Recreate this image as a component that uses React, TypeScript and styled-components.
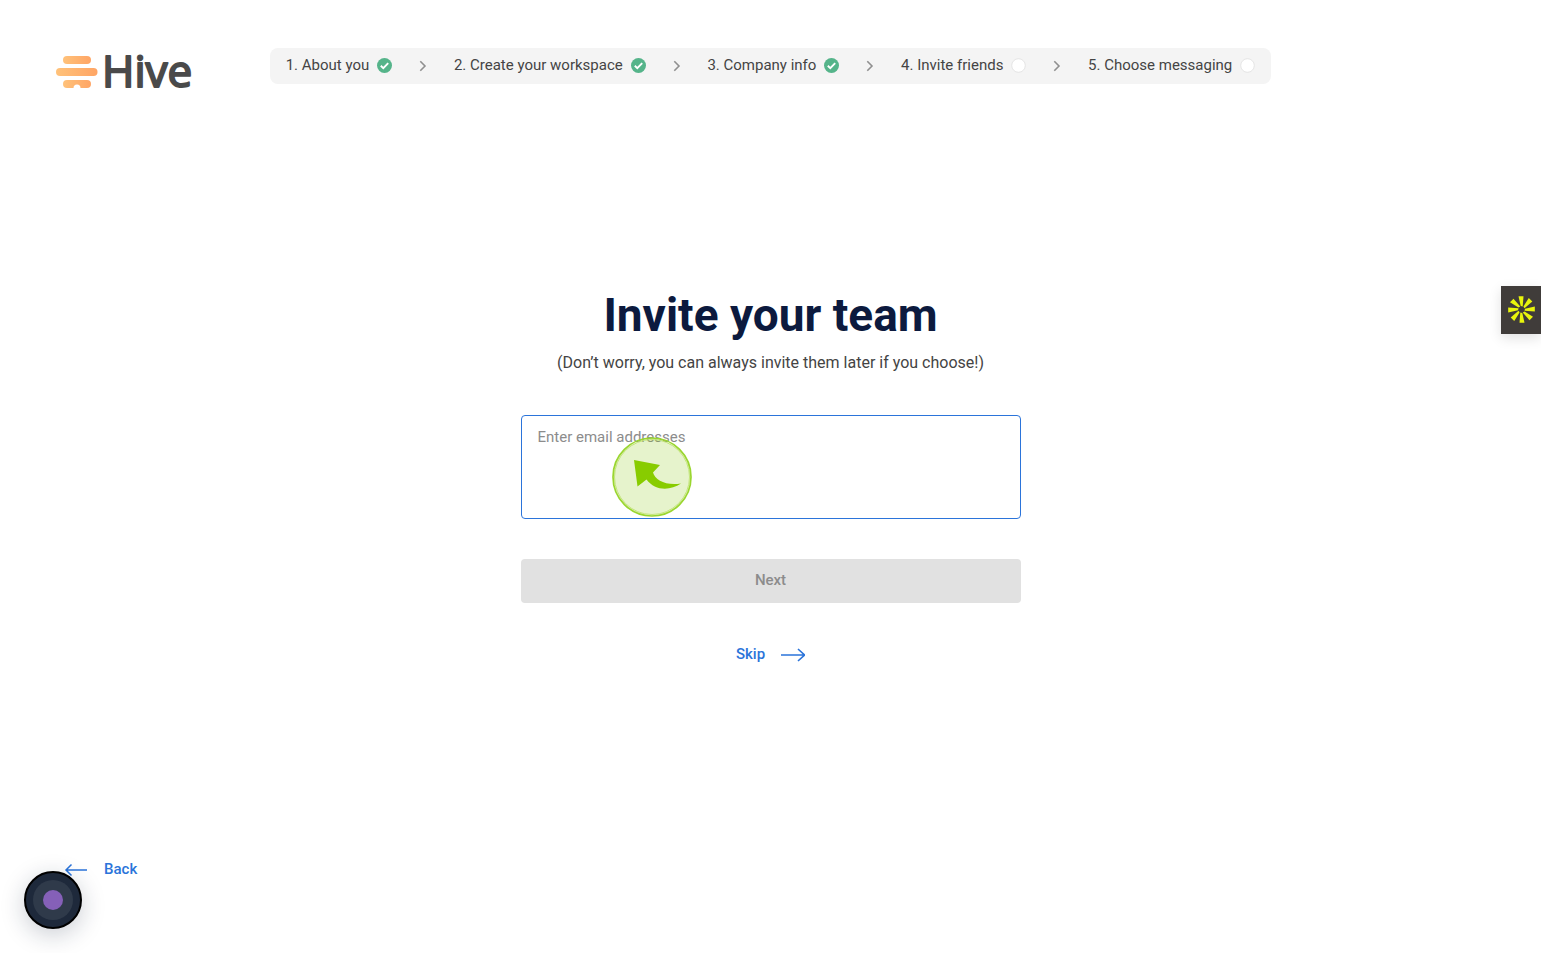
import React from 'react';
import styled, { createGlobalStyle } from 'styled-components';

const GlobalStyle = createGlobalStyle`
  *, *::before, *::after { box-sizing: border-box; }
  body {
    margin: 0;
    background: #fff;
    color: #444;
    font-family: Roboto, "Liberation Sans", sans-serif;
    font-size: 15px;
    line-height: 20px;
  }
`;

const Page = styled.div`
  display: flex;
  flex-direction: column;
  min-height: 100vh;
  overflow: hidden;
`;

const Header = styled.header`
  display: grid;
  grid-template-columns: 1fr auto 1fr;
  align-items: start;
  padding-top: 48px;
`;

const Logo = styled.a`
  display: flex;
  align-items: center;
  gap: 4px;
  height: 48px;
  padding-left: 56px;
  text-decoration: none;
`;

const LogoName = styled.text`
  fill: #4a4a4a;
  stroke: #4a4a4a;
  stroke-width: 2px;
  stroke-linejoin: round;
  font-family: "Open Sans", sans-serif;
  font-size: 44px;
  font-weight: 400;
`;

const Steps = styled.ol`
  display: flex;
  align-items: center;
  justify-content: space-between;
  width: 65vw;
  height: 36px;
  margin: 0;
  padding: 0 16px;
  border-radius: 8px;
  background: #f4f4f4;
  list-style: none;
`;

const Step = styled.li`
  display: flex;
  align-items: center;
  gap: 8px;
  padding-bottom: 2px;
  white-space: nowrap;
`;

const Divider = styled.li`
  display: flex;
`;

const Main = styled.main`
  display: flex;
  flex-direction: column;
  align-items: center;
  padding: 191px 24px 0;
`;

const Title = styled.h1`
  margin: 0;
  color: #0c1a3e;
  font-size: 46px;
  font-weight: 700;
  line-height: 56px;
`;

const Subtitle = styled.p`
  margin: 10px 0 42px;
  font-size: 16px;
`;

const Form = styled.form`
  display: flex;
  flex-direction: column;
  align-items: center;
  gap: 40px;
  width: 100%;
  max-width: 500px;
`;

const Field = styled.div`
  position: relative;
  display: flex;
  width: 100%;
`;

const EmailBox = styled.textarea`
  width: 100%;
  height: 104px;
  padding: 11px 16px;
  border: 1px solid #2b74da;
  border-radius: 4px;
  outline: none;
  background: #fff;
  color: #444;
  font: inherit;
  resize: none;
  &::placeholder { color: #8c8c8c; opacity: 1; }
`;

const Pointer = styled.svg`
  position: absolute;
  top: 22px;
  left: 91px;
  pointer-events: none;
`;

const NextButton = styled.button`
  width: 100%;
  height: 44px;
  padding: 0 0 2px;
  border: 0;
  border-radius: 4px;
  background: #e1e1e1;
  color: #8c8c8c;
  font: inherit;
  font-weight: 500;
`;

const TextLink = styled.a`
  display: inline-flex;
  align-items: center;
  gap: 16px;
  color: #2b74da;
  font-weight: 500;
  line-height: 22px;
  text-decoration: none;
`;

const Footer = styled.footer`
  margin-top: auto;
  padding: 24px 64px 71px;
`;

const SideTab = styled.button`
  position: fixed;
  top: 286px;
  right: 0;
  display: grid;
  place-items: center;
  width: 40px;
  height: 48px;
  padding: 0;
  border: 0;
  background: #403c3a;
  box-shadow: 0 4px 12px rgba(0, 0, 0, 0.12);
`;

const RecordButton = styled.button`
  position: fixed;
  bottom: 24px;
  left: 24px;
  display: grid;
  place-items: center;
  width: 58px;
  height: 58px;
  padding: 0;
  border: 2px solid #000;
  border-radius: 50%;
  background: #1e293b;
  box-shadow: 0 6px 24px rgba(20, 30, 60, 0.22);
`;

const Check = () => (
  <svg width="15" height="15" viewBox="0 0 15 15" role="img" aria-label="Done">
    <circle cx="7.5" cy="7.5" r="7.5" fill="#55b48a" />
    <path d="M3.8 7.8l2.5 2.4 4.9-5" fill="none" stroke="#fff" strokeWidth="1.9" />
  </svg>
);

const Pending = () => (
  <svg width="15" height="15" viewBox="0 0 15 15" role="img" aria-label="To do">
    <circle cx="7.5" cy="7.5" r="6.8" fill="#fff" stroke="#e2e2e2" strokeWidth="0.9" />
  </svg>
);

const Chevron = () => (
  <svg width="8" height="12" viewBox="0 0 8 12" aria-hidden="true">
    <path d="M1.3 1.2L6 6l-4.7 4.8" fill="none" stroke="#8f8f8f" strokeWidth="1.6" />
  </svg>
);

const HiveMark = () => (
  <svg width="42" height="34" viewBox="0 0 42 34" aria-hidden="true">
    <defs>
      <linearGradient id="honey" x1="0" x2="1">
        <stop offset="0" stopColor="#ffc27a" />
        <stop offset="1" stopColor="#ffa565" />
      </linearGradient>
    </defs>
    <rect x="7" y="1" width="28" height="8" rx="4" fill="url(#honey)" />
    <rect x="0" y="13" width="41.5" height="8" rx="4" fill="url(#honey)" />
    <path d="M11 25h20a4 4 0 0 1 0 8h-6.5a3.5 3.5 0 0 0-7 0H11a4 4 0 0 1 0-8z" fill="url(#honey)" />
  </svg>
);

const ArrowRight = () => (
  <svg width="24" height="16" viewBox="0 0 24 16" aria-hidden="true">
    <path d="M0 9h23.5M17 3l6.5 6-6.5 6" fill="none" stroke="#2b74da" strokeWidth="1.6" />
  </svg>
);

const ArrowLeft = () => (
  <svg width="24" height="16" viewBox="0 0 24 16" aria-hidden="true">
    <path d="M23 9H2M7.5 3.5L2 9l5.5 5.5" fill="none" stroke="#2b74da" strokeWidth="1.5" />
  </svg>
);

const Burst = () => (
  <svg width="28" height="28" viewBox="-14.5 -13.5 28 28" aria-hidden="true">
    {[0, 45, 90, 135, 180, 225, 270, 315].map((a) => (
      <path key={a} d="M-3-13.3L2-13.3L1.2-3L-.8-3.5z" fill="#e8f50c" transform={`rotate(${a})`} />
    ))}
  </svg>
);

const steps = [
  { label: '1. About you', done: true },
  { label: '2. Create your workspace', done: true },
  { label: '3. Company info', done: true },
  { label: '4. Invite friends', done: false },
  { label: '5. Choose messaging', done: false },
];

export default function App() {
  return (
    <Page>
      <GlobalStyle />
      <Header>
        <Logo href="#">
          <HiveMark />
          <svg width="104" height="72">
            <LogoName x="0" y="51">Hive</LogoName>
          </svg>
        </Logo>
        <Steps>
          {steps.map((step, i) => (
            <React.Fragment key={step.label}>
              {i > 0 && (
                <Divider aria-hidden="true">
                  <Chevron />
                </Divider>
              )}
              <Step>
                {step.label}
                {step.done ? <Check /> : <Pending />}
              </Step>
            </React.Fragment>
          ))}
        </Steps>
      </Header>
      <Main>
        <Title>Invite your team</Title>
        <Subtitle>(Don’t worry, you can always invite them later if you choose!)</Subtitle>
        <Form>
          <Field>
            <EmailBox aria-label="Email addresses" placeholder="Enter email addresses" />
            <Pointer width="80" height="80" viewBox="0 0 80 80" aria-hidden="true">
              <circle cx="40" cy="40" r="39" fill="#84c100" fillOpacity="0.2" />
              <circle cx="40" cy="40" r="37.5" fill="none" stroke="#c5e67c" strokeWidth="1" />
              <circle cx="40" cy="40" r="39" fill="none" stroke="#9ad62f" strokeWidth="1.7" />
              <path
                d="M22 23L48 28L41 35.5C43 43 54 49 69 46.500C58 54 43 54 34.5 42.5L25.5 49.5Z"
                fill="#88cc00"
              />
            </Pointer>
          </Field>
          <NextButton type="button" disabled>
            Next
          </NextButton>
          <TextLink href="#skip">
            Skip
            <ArrowRight />
          </TextLink>
        </Form>
      </Main>
      <Footer>
        <TextLink href="#back">
          <ArrowLeft />
          Back
        </TextLink>
      </Footer>
      <SideTab aria-label="Open assistant">
        <Burst />
      </SideTab>
      <RecordButton aria-label="Record">
        <svg width="40" height="40" viewBox="0 0 40 40" aria-hidden="true">
          <circle cx="20" cy="20" r="20" fill="#2f3a4a" />
          <circle cx="20" cy="20" r="10" fill="#8560b8" />
        </svg>
      </RecordButton>
    </Page>
  );
}
